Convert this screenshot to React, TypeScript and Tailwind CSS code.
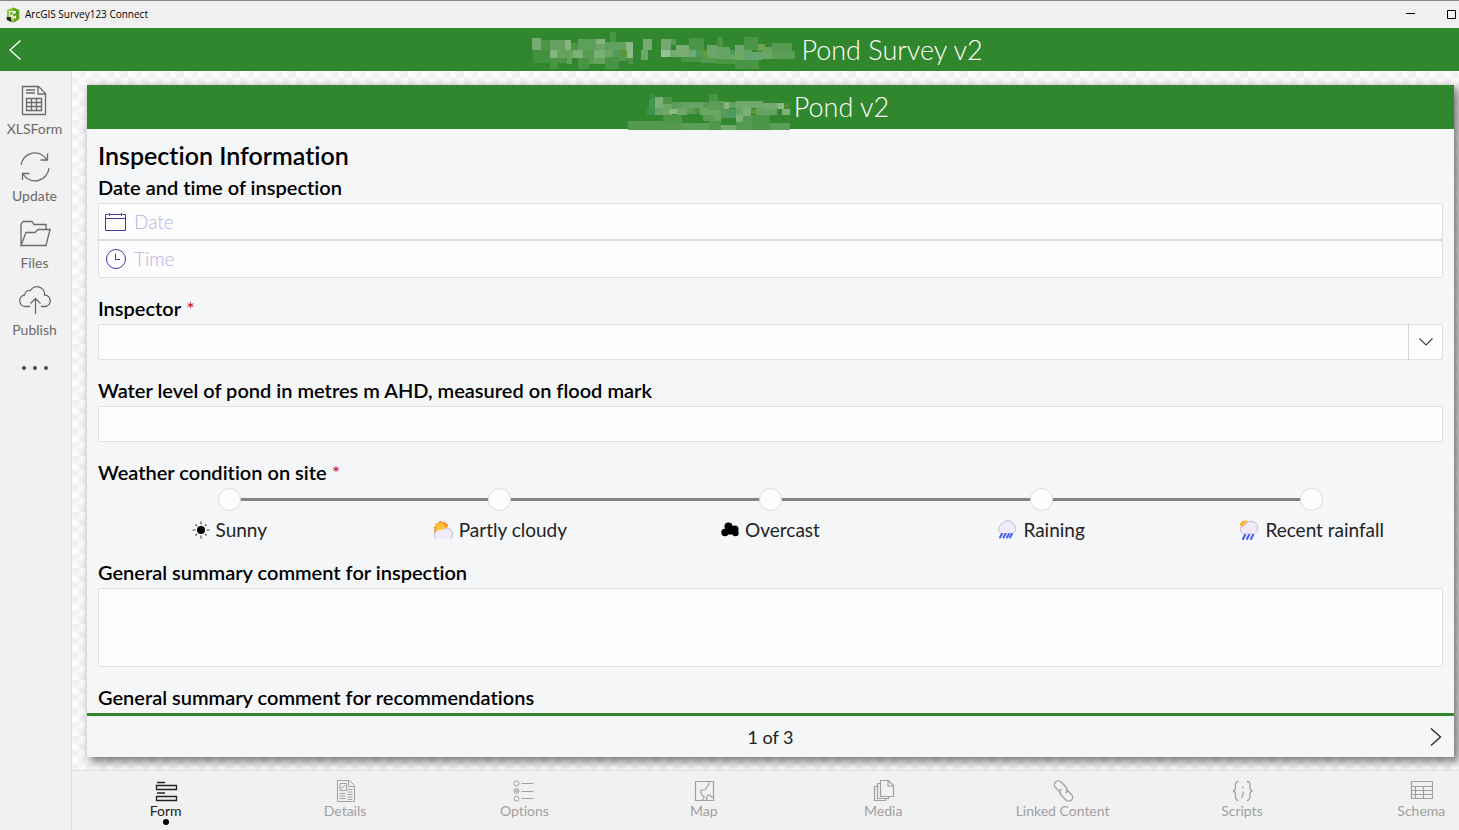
import { useState } from "react";
import type { ReactNode } from "react";

type MosaicBlock = [number, number, number, number, string];

// redacted words in the two titles
const TITLE_MOSAIC: MosaicBlock[] = [
  [66, 40, 27, 35, "#76ac73"], [93, 45, 27, 30, "#4b9547"], [120, 45, 45, 30, "#65a262"], [165, 45, 18, 30, "#86b57f"],
  [183, 55, 21, 20, "#4b9547"], [204, 42, 54, 33, "#5f9f5c"], [258, 42, 27, 15, "#84b481"], [258, 57, 27, 18, "#6aa664"],
  [300, 21, 18, 30, "#4a9546"], [285, 52, 63, 23, "#62a05e"], [348, 52, 21, 23, "#8ab987"],
  [69, 75, 51, 38, "#42913e"], [120, 75, 21, 23, "#83b380"], [141, 75, 48, 23, "#67a35f"], [189, 75, 30, 23, "#7eb07a"],
  [219, 75, 32, 23, "#579b53"], [251, 75, 34, 23, "#7caf75"], [285, 75, 24, 20, "#6ba568"], [309, 75, 18, 20, "#4d9b60"],
  [327, 75, 24, 20, "#57983b"], [351, 75, 18, 25, "#8dba89"], [120, 98, 24, 34, "#4a9446"], [144, 98, 27, 15, "#4b9547"],
  [171, 98, 15, 19, "#62a15e"], [204, 98, 33, 34, "#4a9446"], [237, 98, 15, 19, "#599c55"], [252, 98, 33, 18, "#65a161"],
  [285, 95, 42, 37, "#489345"], [327, 95, 24, 13, "#559a51"], [354, 100, 15, 17, "#4a9446"],
  [399, 42, 27, 33, "#76ac73"], [393, 75, 21, 30, "#6da86a"],
  [453, 42, 30, 33, "#74aa71"], [483, 42, 15, 18, "#589b54"], [453, 75, 27, 21, "#96bf93"], [480, 75, 18, 21, "#76ac73"],
  [498, 60, 39, 36, "#7aad73"], [537, 39, 45, 37, "#4b9547"], [537, 76, 21, 23, "#71a86b"], [558, 76, 18, 23, "#4d9b60"],
  [576, 76, 15, 23, "#5c9b3b"], [591, 60, 30, 39, "#6ca568"], [621, 36, 18, 30, "#489344"], [621, 66, 39, 35, "#67a363"],
  [660, 75, 15, 15, "#499960"], [660, 90, 15, 12, "#6ca568"], [675, 60, 27, 30, "#6ea86a"], [675, 90, 27, 14, "#70a964"],
  [702, 36, 42, 38, "#4c9648"], [744, 57, 21, 20, "#6fa34e"], [702, 74, 24, 30, "#61a46c"], [726, 80, 30, 24, "#67a571"],
  [765, 66, 21, 36, "#68a364"], [786, 54, 60, 24, "#559a51"], [756, 78, 30, 24, "#6ba667"], [786, 78, 69, 24, "#5b9d57"],
  [513, 96, 60, 14, "#4b9547"], [573, 99, 48, 16, "#549952"], [621, 101, 54, 16, "#4b9547"], [675, 104, 72, 27, "#4a9446"],
];

const BANNER_MOSAIC: MosaicBlock[] = [
  [420, 207, 15, 22, "#3e9048"], [417, 222, 18, 30, "#459650"], [411, 252, 24, 17, "#3f914b"], [435, 216, 24, 34, "#7bae75"],
  [459, 216, 27, 22, "#4c9648"], [435, 250, 24, 19, "#6aa468"], [459, 238, 27, 31, "#6fa862"], [486, 231, 30, 21, "#5b9d57"],
  [477, 252, 24, 15, "#8ab981"], [501, 249, 30, 20, "#6fa86c"], [516, 231, 63, 18, "#66a263"], [531, 249, 24, 18, "#5a9c56"],
  [555, 250, 15, 16, "#4b9340"], [570, 249, 27, 20, "#6aa566"], [579, 231, 18, 18, "#589b54"], [597, 207, 27, 20, "#489344"],
  [597, 227, 45, 28, "#5c9e58"], [642, 231, 15, 21, "#86b582"], [657, 231, 27, 18, "#63a15f"], [597, 255, 36, 18, "#6ba668"],
  [633, 252, 21, 27, "#579b53"], [654, 252, 24, 27, "#4d9b60"], [678, 228, 81, 22, "#6fa96c"], [678, 250, 21, 20, "#6ba668"],
  [699, 250, 24, 24, "#7baf78"], [723, 252, 15, 16, "#589939"], [738, 250, 42, 19, "#67a363"], [759, 234, 45, 18, "#73aa70"],
  [804, 234, 18, 18, "#8bb982"], [822, 234, 18, 18, "#478c30"], [780, 252, 21, 17, "#67a363"], [816, 252, 24, 17, "#7eb07b"],
  [459, 269, 57, 20, "#4b9547"], [579, 269, 33, 20, "#599c56"], [612, 273, 21, 18, "#68a364"], [678, 270, 21, 21, "#7baf78"],
  [699, 274, 28, 17, "#559a51"], [727, 269, 54, 20, "#4b9547"],
  [354, 289, 162, 26, "#549950"], [516, 294, 81, 21, "#5c9d58"], [597, 289, 36, 26, "#509847"], [633, 300, 45, 15, "#72aa6e"],
  [678, 291, 49, 24, "#559a51"], [727, 289, 54, 26, "#4b9547"], [781, 294, 59, 21, "#5c9e58"],
];

const WEATHER = [
  { value: "sunny", label: "Sunny", icon: <SunIcon /> },
  { value: "partly_cloudy", label: "Partly cloudy", icon: <PartlyCloudyIcon /> },
  { value: "overcast", label: "Overcast", icon: <OvercastIcon /> },
  { value: "raining", label: "Raining", icon: <RainIcon /> },
  { value: "recent_rainfall", label: "Recent rainfall", icon: <SunRainIcon /> },
];

function Mosaic({ blocks, viewBox, className }: { blocks: MosaicBlock[]; viewBox: string; className: string }) {
  return (
    <svg viewBox={viewBox} className={className} shapeRendering="crispEdges" aria-hidden="true">
      {blocks.map(([x, y, w, h, fill], i) => (
        <rect key={i} x={x} y={y} width={w} height={h} fill={fill} />
      ))}
    </svg>
  );
}

function LineIcon({ size, children }: { size: number; children: ReactNode }) {
  return (
    <svg width={size} height={size} viewBox={`0 0 ${size} ${size}`} fill="none" stroke="currentColor" aria-hidden="true">
      {children}
    </svg>
  );
}

function AppLogo() {
  return (
    <svg width="14" height="16" viewBox="0 0 14 16" aria-hidden="true">
      <path d="M7 .5 13.2 3v9L8 15.500 1 12V3z" fill="#8cc63f" />
      <path d="M7 .5 13.2 3v9L8 15.500V5z" fill="#5fa51c" />
      <path d="M3 4h7v7.500H3z" fill="#e6f4cf" />
      <path d="m4 6 1 1 1.500-2M7 7l1.500 1.500L11.500 5" fill="none" stroke="#4a9016" strokeWidth="1.200" />
      <path d="M.5 10h4.500v3.500l1.500 2-5.500-2.500z" fill="#1d2a16" />
    </svg>
  );
}

function SunIcon() {
  return (
    <svg width="18" height="18" viewBox="0 0 18 18" fill="none" stroke="#444" strokeWidth="1.100" aria-hidden="true">
      <circle cx="9" cy="9" r="4" fill="#000" stroke="none" />
      <path d="M9 .5v3M9 14.500v3M.5 9h3M14.500 9h3M3.500 3.500l1.500 1.500M13 13l1.500 1.500M3.500 14.500l1.500-1.500M13 5l1.500-1.500" />
    </svg>
  );
}

function PartlyCloudyIcon() {
  return (
    <svg width="20" height="20" viewBox="0 0 20 20" aria-hidden="true">
      <path d="m8 1 1.500 1.500L12 1.500l.5 2 2.500.5-.5 2.500L13 9l-6 3-5.500 1L1 11l1-1.500L.5 7.500l2-1.500L2.500 3.500 5 3.500 6 1.500z" fill="#ff8a1f" />
      <circle cx="7.500" cy="8" r="5" fill="#fcc438" />
      <path d="M3 19a5 5 0 0 1 1-8 5 5 0 0 1 5-1 6 6 0 0 1 10 4 6 6 0 0 1-1.500 5z" fill="#f2ebf8" />
      <path d="M3 19a5 5 0 0 1 0-7.500M12.500 8.500a6 6 0 0 1 5 10.500" fill="none" stroke="#c4bacf" />
    </svg>
  );
}

function OvercastIcon() {
  return (
    <svg width="18" height="16" viewBox="0 0 18 16" aria-hidden="true">
      <circle cx="7.500" cy="4.500" r="4" fill="#000" />
      <circle cx="4" cy="10.500" r="3.700" fill="#000" />
      <circle cx="14" cy="7" r="3.500" fill="#000" />
      <circle cx="14.500" cy="11" r="3.200" fill="#000" />
      <path d="M4.500 4h9v8.500H5z" fill="#000" />
    </svg>
  );
}

function RainIcon() {
  return (
    <svg width="20" height="20" viewBox="0 0 20 20" aria-hidden="true">
      <path d="M4 13.500a5 5 0 0 1-1.500-7 5 5 0 0 1 3-3 6.500 6.500 0 0 1 11 .5 5.500 5.500 0 0 1 .5 8.500l-2 1z" fill="#f1eaf8" stroke="#b9b0c6" strokeWidth=".8" />
      <path d="m5 14-2 3.500M8.500 14l-2 3.500M12 14l-2 3.500M15 14l-2 3.500" stroke="#3d5ef5" strokeWidth="2" strokeLinecap="round" />
    </svg>
  );
}

function SunRainIcon() {
  return (
    <svg width="20" height="20" viewBox="0 0 20 20" aria-hidden="true">
      <path d="m4 .5 2 .5L8 .5l1 2-5 6-2.500-.5.5-2L.5 4l1.500-1z" fill="#ff981f" />
      <circle cx="6" cy="5" r="3.500" fill="#fcc438" />
      <path d="M4 14a5 5 0 0 1-2.500-5 4.500 4.500 0 0 1 4-3.500 6.500 6.500 0 0 1 9-3.500 5 5 0 0 1 4 6 5 5 0 0 1-2.500 5.500l-1 .5z" fill="#f1eaf8" stroke="#b9b0c6" strokeWidth=".8" />
      <path d="m6 15-2 4M10 15l-2 4M14 15l-2 4" stroke="#3d5ef5" strokeWidth="2" strokeLinecap="round" />
    </svg>
  );
}

const SIDE_ITEMS = [
  {
    label: "XLSForm",
    icon: (
      <LineIcon size={32}>
        <path d="M4.500 2.500h16l7 7v21h-23zM20 2.500v7.500h7.500M8 6h9M8 9h9M8.500 14.500h15v12h-15zM8.500 18.500h15M8.500 22.500h15M13.500 14.500v12M18.500 14.500v12" strokeWidth="1.300" />
      </LineIcon>
    ),
  },
  {
    label: "Update",
    icon: (
      <LineIcon size={32}>
        <path d="M2 14a14 14 0 0 1 26-5M30 17a14 14 0 0 1-26 6M28.500 2.500v6.500h-7M3.500 29v-6.500h7" strokeWidth="1.300" />
      </LineIcon>
    ),
  },
  {
    label: "Files",
    icon: (
      <LineIcon size={32}>
        <path d="M2 27.500v-21l2-3h9l2 3h12v4.500M2 27.500l5-13h9l3-3h12l-4 16z" strokeWidth="1.300" />
      </LineIcon>
    ),
  },
  {
    label: "Publish",
    icon: (
      <LineIcon size={32}>
        <path d="M11 21.500H6.500a5.800 5.800 0 0 1-1-11.500 5.500 5.500 0 0 1 6-4.500 7.500 7.500 0 0 1 14 4.500 5.800 5.800 0 0 1 1 11.500h-4.500M16.500 29V14M11.500 18.500l5-5 5 5" strokeWidth="1.300" />
      </LineIcon>
    ),
  },
];

const TABS = [
  {
    label: "Form",
    icon: (
      <LineIcon size={24}>
        <path d="M3 3.500h8M2.500 6.500h20v4h-20zM3 14h8M2.500 17.500h20v4h-20z" strokeWidth="1.300" />
      </LineIcon>
    ),
  },
  {
    label: "Details",
    icon: (
      <LineIcon size={24}>
        <path d="M4.500 1.500h12l5 5v16h-17zM15.500 1.500v6h6M7 4.500h6.500v7H7zM8 10l4-4M6.500 14.500h6M6.500 17h6M6.500 19.500h6M14.500 10.500h5M14.500 13h5M14.500 15.500h5M14.500 18h5M14.500 20.500h5" />
      </LineIcon>
    ),
  },
  {
    label: "Options",
    icon: (
      <LineIcon size={24}>
        <circle cx="4.500" cy="4.500" r="2.500" />
        <circle cx="4.500" cy="12" r="2.500" />
        <circle cx="4.500" cy="12" r="1" />
        <circle cx="4.500" cy="19.500" r="2.500" />
        <path d="M9.500 4.500h12M9.500 12.500h12M9.500 19.500h12" />
      </LineIcon>
    ),
  },
  {
    label: "Map",
    icon: (
      <LineIcon size={24}>
        <path d="M3.500 2.500h18v19h-18zM17.500 2.500c-.5 5-3 5-4 8-1 1.500-5-1-5 2.500 2 2 0 3 3 4 2 1.500-1 3-1 4.500M14.500 21.500c0-4 1-6 3.500-5.500.5 2 2 2 3.500 2" strokeWidth="1.200" />
      </LineIcon>
    ),
  },
  {
    label: "Media",
    icon: (
      <LineIcon size={24}>
        <path d="M9.500 1.500h8l5 5v11h-13zM17 1.500v5.500h5.500M9 4.500H6.500v15h11V18M6 7.500H3.500v14h11V20" strokeWidth="1.200" />
      </LineIcon>
    ),
  },
  {
    label: "Linked Content",
    icon: (
      <LineIcon size={24}>
        <path d="m10 14-5.500-5.500a3.800 3.800 0 0 1 5.500-5.500l5 5a3.800 3.800 0 0 1-.5 6M15 10l5.500 5.500a3.800 3.800 0 0 1-5.500 5.500l-5-5a3.800 3.800 0 0 1 .5-6" strokeWidth="1.300" />
      </LineIcon>
    ),
  },
  {
    label: "Scripts",
    icon: (
      <LineIcon size={24}>
        <path d="M8.500 2.500C6 2.500 5.500 3.500 5.500 6.500s.5 5-2.500 5.500c3 .5 2.500 2.500 2.500 5s.5 4.500 3 4.500M17 2.500c2.500 0 3 1 3 4s-.5 5 2.500 5.500c-3 .5-2.500 2.500-2.500 5s-.5 4.500-3 4.500M13 7.500v2M13 12.500v3.500l-1.500 3" strokeWidth="1.300" />
      </LineIcon>
    ),
  },
  {
    label: "Schema",
    icon: (
      <LineIcon size={24}>
        <path d="M2.500 2.500h21v17h-21zM2.500 7.500h21M2.500 11.500h21M2.500 15.500h21M6.500 7.500v12M14.500 7.500v12" strokeWidth="1.200" />
      </LineIcon>
    ),
  },
];

function FieldLabel({ htmlFor, required, children }: { htmlFor: string; required?: boolean; children: ReactNode }) {
  return (
    <label htmlFor={htmlFor} className="block text-xl leading-8 font-semibold text-black">
      {children}
      {required && <span className="font-normal text-[#c4161c]"> *</span>}
    </label>
  );
}

export default function App() {
  const [activeTab, setActiveTab] = useState("Form");
  const [weather, setWeather] = useState("");

  return (
    <div className="flex h-screen flex-col overflow-hidden bg-[#f1f1f1] font-[Lato,sans-serif] [font-variant-ligatures:none]">
      {/* Window title bar */}
      <div className="flex h-7 shrink-0 items-center justify-between border-t border-[#8b878c] bg-[#f0f0f0] pr-[3px] pl-1.5">
        <div className="flex items-center gap-[5px]">
          <AppLogo />
          <span className="font-['Open_Sans',sans-serif] text-[10px] text-black">ArcGIS Survey123 Connect</span>
        </div>
        <div className="flex gap-8">
          <button type="button" aria-label="Minimize">
            <svg width="9" height="9" viewBox="0 0 9 9" stroke="#000" fill="none"><path d="M0 3.500h9" /></svg>
          </button>
          <button type="button" aria-label="Maximize">
            <svg width="9" height="9" viewBox="0 0 9 9" stroke="#000" fill="none"><path d="M.5.5h8v8h-8z" /></svg>
          </button>
        </div>
      </div>

      <header className="flex h-[43px] w-[calc(100%+52px)] shrink-0 items-center bg-[#31872e] text-white">
        <button type="button" aria-label="Back" className="w-8 pl-2">
          <svg width="14" height="22" viewBox="0 0 14 22" fill="none" stroke="currentColor" strokeWidth="1.300"><path d="M12.500 1.500 2 11l10.500 9.500" /></svg>
        </button>
        <h1 className="flex flex-1 items-center justify-center gap-1.5 pr-7 text-[27px] leading-8 font-light">
          <Mosaic blocks={TITLE_MOSAIC} viewBox="66 21 789 111" className="mt-0.5 h-[37px] w-[263px]" />
          Pond Survey v2
        </h1>
      </header>

      <div className="flex min-h-0 flex-1">
        <aside className="flex w-[72px] shrink-0 flex-col items-center gap-[13px] border-r border-[#dcdcdc] pt-[13px] pr-0.5 text-[#6a6a6a]">
          {SIDE_ITEMS.map((item) => (
            <button key={item.label} type="button" className="flex flex-col items-center gap-1 text-sm leading-[18px]">
              {item.icon}
              {item.label}
            </button>
          ))}
          <button type="button" aria-label="More" className="flex h-8 items-center gap-[7px]">
            <span className="size-1 rounded-full bg-[#4a4a4a]" />
            <span className="size-1 rounded-full bg-[#4a4a4a]" />
            <span className="size-1 rounded-full bg-[#4a4a4a]" />
          </button>
        </aside>

        <div className="flex min-w-0 flex-1 flex-col">
          <main className="flex min-h-0 flex-1 overflow-hidden bg-[#fbfbfb] bg-[conic-gradient(#f3f1f3_25%,transparent_0_50%,#f3f1f3_0_75%,transparent_0)] bg-size-[14px_14px] pt-3.5 pr-[5px] pb-[13px] pl-[15px]">
            <form className="flex min-w-0 flex-1 flex-col bg-[#f4f6f8] shadow-[4px_4px_9px_1px_rgba(0,0,0,0.5)]">
              <div className="flex h-11 shrink-0 items-center justify-center gap-1 bg-[#31872e] pr-6 text-[27px] leading-8 font-light text-white">
                <Mosaic blocks={BANNER_MOSAIC} viewBox="354 207 486 108" className="mt-2.5 h-9 w-[162px]" />
                Pond v2
              </div>

              <div className="flex min-h-0 flex-1 flex-col gap-3.5 overflow-hidden px-[11px] pt-2.5">
                <div>
                  <h2 className="text-[25px] leading-8 font-semibold text-black">Inspection Information</h2>
                  <FieldLabel htmlFor="inspection-date">Date and time of inspection</FieldLabel>
                  <div className="divide-y-2 divide-[#dcdcdc] rounded-xs border border-[#dfe0e1] bg-[#fdfdfd] text-[#4338a8]">
                    <div className="flex h-[37px] items-center gap-[7px] pl-1.5">
                      <svg width="22" height="22" viewBox="0 0 22 22" fill="none" stroke="currentColor" aria-hidden="true">
                        <path d="M.5 3.500v16h20v-16M.5 7.500h20M.5 3.500h3M5 3.500h11M17.500 3.500h3M4.500 2v3M16.500 2v3" />
                      </svg>
                      <input id="inspection-date" type="text" placeholder="Date" className="min-w-0 flex-1 text-[19px] leading-6 font-light outline-none placeholder:text-[#b9b2e2]" />
                    </div>
                    <div className="flex h-9 items-center gap-[7px] pl-1.5">
                      <svg width="22" height="22" viewBox="0 0 22 22" fill="none" stroke="currentColor" aria-hidden="true">
                        <circle cx="11" cy="11" r="9.500" />
                        <path d="M10.500 5.500v6h4.500" />
                      </svg>
                      <input aria-label="Time of inspection" type="text" placeholder="Time" className="min-w-0 flex-1 text-[19px] leading-6 font-light outline-none placeholder:text-[#b9b2e2]" />
                    </div>
                  </div>
                </div>

                <div>
                  <FieldLabel htmlFor="inspector" required>Inspector</FieldLabel>
                  <div className="relative h-9">
                    <select id="inspector" className="h-9 w-full appearance-none rounded-xs border border-[#dfe0e1] bg-[#fdfdfd] px-2 text-lg">
                      <option value="" />
                    </select>
                    <span className="pointer-events-none absolute inset-y-0 right-0 flex w-[35px] items-center justify-center border-l border-[#d5d6d7]">
                      <svg width="14" height="8" viewBox="0 0 14 8" fill="none" stroke="#444" strokeWidth="1.200"><path d="m.5.5 6.500 6.500 6.500-6.500" /></svg>
                    </span>
                  </div>
                </div>

                <div>
                  <FieldLabel htmlFor="water-level">Water level of pond in metres m AHD, measured on flood mark</FieldLabel>
                  <input id="water-level" type="text" className="block h-9 w-full rounded-xs border border-[#dfe0e1] bg-[#fdfdfd] px-2 text-lg" />
                </div>

                <fieldset>
                  <legend className="block text-xl leading-8 font-semibold text-black">
                    Weather condition on site<span className="font-normal text-[#c4161c]"> *</span>
                  </legend>
                  <div className="relative -mx-1 grid grid-cols-5">
                    <span className="absolute top-2.5 right-[10%] left-[10%] h-[3px] bg-[#808284]" />
                    {WEATHER.map((w) => (
                      <label key={w.value} className="relative flex flex-col items-center gap-[7px] text-[19px] leading-6 text-[#222]">
                        <input
                          type="radio"
                          name="weather"
                          value={w.value}
                          checked={weather === w.value}
                          onChange={() => setWeather(w.value)}
                          className="size-[23px] appearance-none rounded-full border border-[#dcdcdc] bg-[#fdfdfd] checked:bg-[#31872e]"
                        />
                        <span className="flex items-center gap-1.5">
                          {w.icon}
                          {w.label}
                        </span>
                      </label>
                    ))}
                  </div>
                </fieldset>

                <div>
                  <FieldLabel htmlFor="summary">General summary comment for inspection</FieldLabel>
                  <textarea id="summary" className="block h-[79px] w-full resize-none rounded-xs border border-[#dfe0e1] bg-[#fdfdfd] p-2 text-lg" />
                </div>

                <div>
                  <FieldLabel htmlFor="recommendations">General summary comment for recommendations</FieldLabel>
                  <textarea id="recommendations" className="block h-[79px] w-full resize-none rounded-xs border border-[#dfe0e1] bg-[#fdfdfd] p-2 text-lg" />
                </div>
              </div>

              <div className="relative flex h-11 shrink-0 items-center justify-center border-t-3 border-[#31872e]">
                <span className="text-lg leading-6 text-[#222]">1 of 3</span>
                <button type="button" aria-label="Next page" className="absolute right-3">
                  <svg width="12" height="18" viewBox="0 0 12 18" fill="none" stroke="#222" strokeWidth="1.300"><path d="m1 .5 9.500 8.500L1 17.500" /></svg>
                </button>
              </div>
            </form>
          </main>

          <nav className="h-[60px] shrink-0 overflow-hidden border-t border-[#dedede] pl-1">
            <div className="flex w-[calc(100%+52px)]">
              {TABS.map((tab) => (
                <button
                  key={tab.label}
                  type="button"
                  onClick={() => setActiveTab(tab.label)}
                  className={`flex flex-1 basis-0 flex-col items-center pt-2 text-sm leading-4 ${
                    activeTab === tab.label ? "text-[#222]" : "text-[#a0a0a0]"
                  }`}
                >
                  {tab.icon}
                  {tab.label}
                  {activeTab === tab.label && <span className="size-1.5 rounded-full bg-black" />}
                </button>
              ))}
            </div>
          </nav>
        </div>
      </div>
    </div>
  );
}
